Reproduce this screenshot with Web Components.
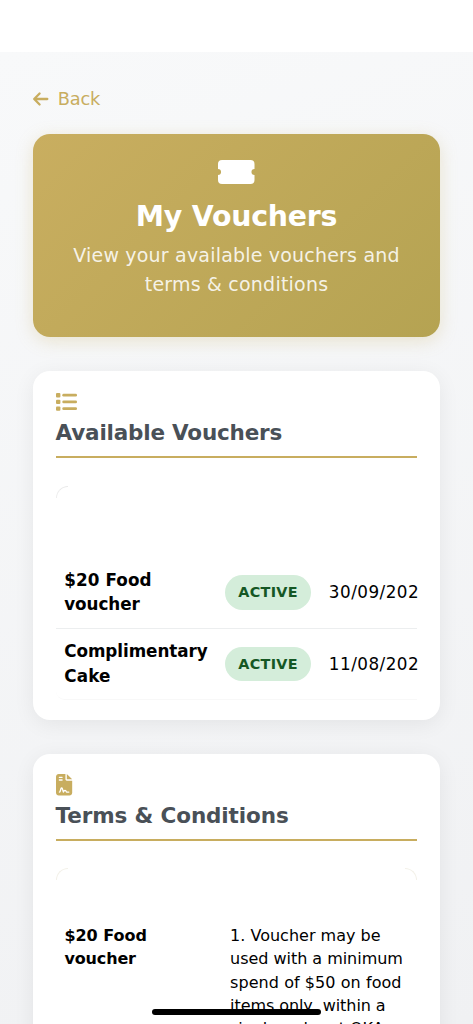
<!DOCTYPE html>
<html lang="en">
<head>
<meta charset="utf-8">
<title>My Vouchers</title>
<style>
html,body{margin:0;height:1024px;overflow:hidden;background:#fff}
body{font-family:"DejaVu Sans",Verdana,sans-serif;color:#000}
</style>
</head>
<body>
<voucher-app></voucher-app>
<script>
const define=(name,html,setup)=>customElements.define(name,class extends HTMLElement{
  connectedCallback(){
    if(this.shadowRoot)return;
    this.attachShadow({mode:'open'}).innerHTML=html;
    if(setup)setup.call(this);
  }
});

// One line of text, tracked so that it fills the measure given by "w".
define('text-line',`<style>
:host{display:block;white-space:nowrap;width:max-content}
span{display:inline-block}
</style><span><slot></slot></span>`,function(){
  const s=this.shadowRoot.querySelector('span'),w=+this.getAttribute('w'),n=this.textContent.length;
  if(w)s.style.letterSpacing=((w-s.getBoundingClientRect().width)/n)+'px';
});

define('ui-icon',`<style>:host{display:block}svg{display:block;width:100%;height:100%;overflow:visible}</style><svg fill="currentColor" preserveAspectRatio="none"></svg>`,function(){
  const icons={
    back:['0 0 16 14','<path d="M6.6 1.5 1.2 7 6.6 12.5M1.5 7H14.3" fill="none" stroke="currentColor" stroke-width="2.3" stroke-linecap="round" stroke-linejoin="round"/>'],
    ticket:['0 0 36 24','<path d="M4 0H32Q36 0 36 4V9A3 3 0 0 0 36 15V20Q36 24 32 24H4Q0 24 0 20V15A3 3 0 0 0 0 9V4Q0 0 4 0Z"/>'],
    list:['0 0 21 18','<rect y="0" width="4.4" height="4.4" rx="1"/><rect y="6.7" width="4.4" height="4.4" rx="1"/><rect y="13.4" width="4.4" height="4.4" rx="1"/><rect x="6.3" y=".85" width="14.7" height="2.7" rx="1.3"/><rect x="6.3" y="7.55" width="14.7" height="2.7" rx="1.3"/><rect x="6.3" y="14.25" width="14.7" height="2.7" rx="1.3"/>'],
    contract:['0 0 384 512','<path fill-rule="evenodd" d="M64 0C29 0 0 29 0 64V448c0 35 29 64 64 64H320c35 0 64-29 64-64V160H256c-18 0-32-14-32-32V0zM256 0V128H384zM80 64h64a16 16 0 0 1 0 32H80a16 16 0 0 1 0-32zm0 64h64a16 16 0 0 1 0 32H80a16 16 0 0 1 0-32zM134 351l-22 73c-5 14-17 24-32 24a16 16 0 0 1 0-32c1 0 1 0 2-1l22-74c4-13 16-22 30-22s25 9 29 22l15 50c10-8 21-12 34-12 18 0 34 10 42 26l5 11H304a16 16 0 0 1 0 32H250c-6 0-12-4-15-9l-8-18c-6-12-22-12-28 0l-8 18c-7 13-25 11-30-4z"/>']
  };
  const [v,p]=icons[this.getAttribute('name')],s=this.shadowRoot.querySelector('svg');
  s.setAttribute('viewBox',v);s.innerHTML=p;
});

define('back-link',`<style>
:host{display:flex;align-items:center;gap:8.4px;color:#c8ad5f;font-size:17.8px;line-height:24px;height:24px}
ui-icon{width:16px;height:14px}
</style><ui-icon name="back"></ui-icon><text-line w="42.3">Back</text-line>`);

define('hero-banner',`<style>
:host{display:flex;flex:none;flex-direction:column;align-items:center;box-sizing:border-box;height:203.3px;padding-top:26px;border-radius:17px;color:#fff;background:linear-gradient(135deg,#c9ae60,#b5a352);box-shadow:0 4px 17px rgba(200,174,96,.27)}
ui-icon{width:36.5px;height:24px}
.title{font-size:28.4px;font-weight:700;line-height:36px;margin-top:14.5px}
.sub{display:flex;flex-direction:column;align-items:center;font-size:19px;line-height:28.8px;margin-top:6.8px;color:rgba(255,255,255,.87)}
</style><ui-icon name="ticket"></ui-icon>
<text-line class="title" w="201.5">My Vouchers</text-line>
<div class="sub"><text-line w="326.5">View your available vouchers and</text-line><text-line w="183.5">terms &amp; conditions</text-line></div>`);

define('content-card',`<style>
:host{display:block;box-sizing:border-box;background:#fff;border-radius:17px;padding:0 22.2px;box-shadow:0 4px 21px rgba(0,0,0,.065)}
header{display:flex;flex-direction:column;color:#495057;height:85.2px;border-bottom:2.4px solid #c8ad5f}
.icon{display:flex;align-items:center;box-sizing:border-box;color:#c8ad5f;flex:none;height:46px;padding-top:17px}
.title{font-size:21.5px;font-weight:700;line-height:30px;margin-top:1px}
</style><header><div class="icon"><slot name="icon"></slot></div><div class="title"><slot name="title"></slot></div></header><slot></slot>`);

define('status-pill',`<style>
:host{display:flex;align-items:center;justify-content:center;width:85.7px;height:34.4px;border-radius:18px;background:#d4edda;color:#155724;font-size:14.4px;font-weight:700;line-height:20px}
</style><text-line w="59.5">ACTIVE</text-line>`);

define('voucher-row',`<style>
:host{display:grid;grid-template-columns:169.7px 103.6px 1fr;align-items:center;box-sizing:border-box;height:71.4px;border-bottom:1.4px solid #eceeef;font-size:16.8px;line-height:24.4px}
:host([last]){border-bottom-color:#f8f8f8;border-bottom-left-radius:9px}
.name{padding-left:8.6px;font-weight:700}
</style><div class="name"><slot name="name"></slot></div><status-pill></status-pill><slot name="date"></slot>`);

define('table-corners',`<style>
:host{display:flex;justify-content:space-between;height:12px}
i{display:block;width:11px;height:11px;border-top:1px solid #e9e9e9;border-left:1px solid #eee;border-radius:12px 0 0}
i.r{border-left:0;border-right:1px solid #f0eee6;border-radius:0 12px 0 0}
:host([soft]) i{border-color:#f3f1e9}
:host(:not([soft])) .r{visibility:hidden}
</style><i></i><i class="r"></i>`);

define('voucher-app',`<style>
:host{display:block;height:1024px;overflow:hidden;position:relative}
.status{height:52px;background:#fff}
main{box-sizing:border-box;height:972px;padding:35.3px 33.4px 0;background:linear-gradient(160deg,#f8f9fa,#f0f1f3);display:flex;flex-direction:column}
hero-banner{margin-top:22.9px}
content-card{margin-top:33.4px;flex:none}
.one{height:349.4px}.two{height:600px}
.list{width:21px;height:18px}.doc{width:16.2px;height:21.4px}
table-corners{margin-top:27.6px}
.rows{margin-top:59.5px}
.terms{display:grid;grid-template-columns:165.7px 1fr;padding-left:8.8px;margin-top:43.9px;font-size:16px;line-height:23.15px}
.terms b{display:block}
.home{position:absolute;left:152px;top:1009px;width:169px;height:5.5px;border-radius:3px;background:#000}
</style>
<div class="status"></div>
<main>
<back-link></back-link>
<hero-banner></hero-banner>
<content-card class="one">
<ui-icon slot="icon" class="list" name="list"></ui-icon><text-line slot="title" w="226.5">Available Vouchers</text-line>
<table-corners></table-corners>
<div class="rows">
<voucher-row><text-line slot="name" w="87.5">$20 Food</text-line><text-line slot="name" w="75.5">voucher</text-line><text-line slot="date" w="90.3">30/09/202</text-line></voucher-row>
<voucher-row last><text-line slot="name" w="143.5">Complimentary</text-line><text-line slot="name" w="46.5">Cake</text-line><text-line slot="date" w="90.3">11/08/202</text-line></voucher-row>
</div>
</content-card>
<content-card class="two">
<ui-icon slot="icon" class="doc" name="contract"></ui-icon><text-line slot="title" w="233">Terms &amp; Conditions</text-line>
<table-corners soft></table-corners>
<div class="terms"><b><text-line w="82.5">$20 Food</text-line><text-line w="71.5">voucher</text-line></b>
<div><text-line w="150.5">1. Voucher may be</text-line><text-line w="172.8">used with a minimum</text-line><text-line w="171.5">spend of $50 on food</text-line><text-line w="155.5">items only, within a</text-line><text-line w="153.5">single order at OKA</text-line></div></div>
</content-card>
</main>
<div class="home"></div>`);
</script>
</body>
</html>
